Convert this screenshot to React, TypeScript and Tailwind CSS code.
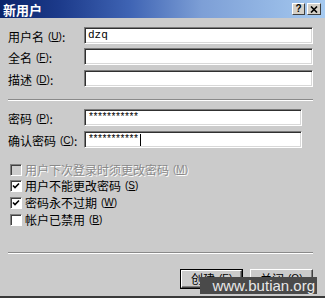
import React from "react";

const font = { fontFamily: '"Noto Sans CJK SC", "Liberation Sans", sans-serif' };

function Mn({ c }: { c: string }) {
  return (
    <span className="text-[10px] ml-[4px]" style={{ fontFamily: '"Liberation Sans", sans-serif' }}>
      (<span className="underline">{c}</span>)
    </span>
  );
}

function Input({ value, cursor, w }: { value?: string; cursor?: boolean; w: string }) {
  const stars = value?.startsWith("*");
  return (
    <div
      className={`${w} h-[17px] bg-white border-t-[1px] border-l-[1px] border-t-[#7a7a7a] border-l-[#7a7a7a] border-b-[1px] border-r-[1px] border-b-white border-r-white shadow-[inset_1px_1px_0_#303030,inset_-1px_-1px_0_#d8d8d8] flex items-center pl-[3px]`}
    >
      {value && (
        <span
          className={`${stars ? "text-[10px]" : "text-[11px]"} leading-none text-black`}
          style={{ fontFamily: '"Liberation Mono", monospace', letterSpacing: stars ? "-1.5px" : "0" }}
        >
          {value}
        </span>
      )}
      {cursor && <span className="w-[1px] h-[12px] bg-black ml-[2px]" />}
    </div>
  );
}

function Row({ label, mn, children, mt }: { label: string; mn: string; children: React.ReactNode; mt: string }) {
  return (
    <div className={`flex items-center ${mt}`}>
      <div className="w-[76px] text-[12px] text-black leading-none flex items-center pt-[2px]">
        {label}
        <Mn c={mn} />:
      </div>
      {children}
    </div>
  );
}

function Check({ checked, disabled, label, mn, mt }: { checked?: boolean; disabled?: boolean; label: string; mn: string; mt: string }) {
  return (
    <div className={`flex items-center ${mt}`}>
      <div
        className={`w-[12px] h-[12px] ml-[2px] ${disabled ? "bg-[#cdcdcd]" : "bg-white"} border-t-[1px] border-l-[1px] border-t-[#808080] border-l-[#808080] border-b-[1px] border-r-[1px] border-b-white border-r-white shadow-[inset_1px_1px_0_#404040] flex items-center justify-center`}
      >
        {checked && (
          <svg width="8" height="8" viewBox="0 0 8 8">
            <path d="M1 3.5 L3 5.5 L7 1.5" stroke="#000" strokeWidth="1.6" fill="none" />
          </svg>
        )}
      </div>
      <div
        className={`ml-[3px] text-[12px] leading-none flex items-center ${disabled ? "text-[#8a8a8a] [text-shadow:1px_1px_0_#ffffff]" : "text-black"}`}
      >
        {label}
        <Mn c={mn} />
      </div>
    </div>
  );
}

function Sep({ mt }: { mt: string }) {
  return (
    <div className={`${mt} mr-[12px] h-[2px] border-t-[1px] border-t-[#8a8a8a] border-b-[1px] border-b-white`} />
  );
}

function Btn({ label, mn, def }: { label: string; mn: string; def?: boolean }) {
  return (
    <div className={`w-[63px] h-[20px] ${def ? "border border-black" : ""}`}>
      <div className="w-full h-full border-t-[1px] border-l-[1px] border-t-white border-l-white border-b-[1px] border-r-[1px] border-b-[#404040] border-r-[#404040] shadow-[inset_-1px_-1px_0_#808080] flex items-center justify-start pl-[9px] text-[12px] leading-none text-black">
        {label}
        <Mn c={mn} />
      </div>
    </div>
  );
}

export default function App() {
  return (
    <div className="w-[325px] h-[298px] bg-[#cbcbcb] relative overflow-hidden border-b-2 border-b-[#3a3a3a]" style={font}>
      <div className="h-[18px] bg-[linear-gradient(90deg,#0a246a_0%,#1c3a8a_18%,#3f64b4_40%,#7d9fd6_62%,#a6caf0_100%)] flex items-center pl-[3px] pr-[4px]">
        <span className="text-white text-[13px] font-bold leading-none">新用户</span>
        <div className="ml-auto flex gap-[2px]">
          <div className="w-[13px] h-[12px] bg-[#d4d0c8] border-t border-l border-t-white border-l-white border-b border-r border-b-[#404040] border-r-[#404040] flex items-center justify-center text-[10px] font-bold leading-none" style={{ fontFamily: '"Liberation Sans", sans-serif' }}>?</div>
          <div className="w-[14px] h-[12px] bg-[#d4d0c8] border-t border-l border-t-white border-l-white border-b border-r border-b-[#404040] border-r-[#404040] flex items-center justify-center">
            <svg width="8" height="7" viewBox="0 0 8 7">
              <path d="M1 0.5 L7 6.5 M7 0.5 L1 6.5" stroke="#000" strokeWidth="1.6" />
            </svg>
          </div>
        </div>
      </div>
      <div className="pl-[8px]">
        <Row label="用户名" mn="U" mt="mt-[9px]">
          <Input value="dzq" w="w-[229px]" />
        </Row>
        <Row label="全名" mn="F" mt="mt-[4px]">
          <Input w="w-[229px]" />
        </Row>
        <Row label="描述" mn="D" mt="mt-[5px]">
          <Input w="w-[229px]" />
        </Row>
        <Sep mt="mt-[12px]" />
        <Row label="密码" mn="P" mt="mt-[8px]">
          <Input value="***********" w="w-[218px]" />
        </Row>
        <Row label="确认密码" mn="C" mt="mt-[5px]">
          <Input value="***********" cursor w="w-[218px]" />
        </Row>
        <Check disabled label="用户下次登录时须更改密码" mn="M" mt="mt-[16px]" />
        <Check checked label="用户不能更改密码" mn="S" mt="mt-[4px]" />
        <Check checked label="密码永不过期" mn="W" mt="mt-[5px]" />
        <Check label="帐户已禁用" mn="B" mt="mt-[5px]" />
        <Sep mt="mt-[26px]" />
        <div className="flex justify-end gap-[7px] mr-[12px] mt-[15px]">
          <Btn label="创建" mn="E" def />
          <Btn label="关闭" mn="O" />
        </div>
      </div>
      <div className="absolute left-[200px] top-[277px] w-[117px] h-[17px] bg-[#4a4a4a] flex items-center justify-end pr-[2px]">
        <span className="text-[#e8e8e8] text-[15px] leading-none" style={{ fontFamily: '"Liberation Sans", sans-serif' }}>www.butian.org</span>
      </div>
    </div>
  );
}
